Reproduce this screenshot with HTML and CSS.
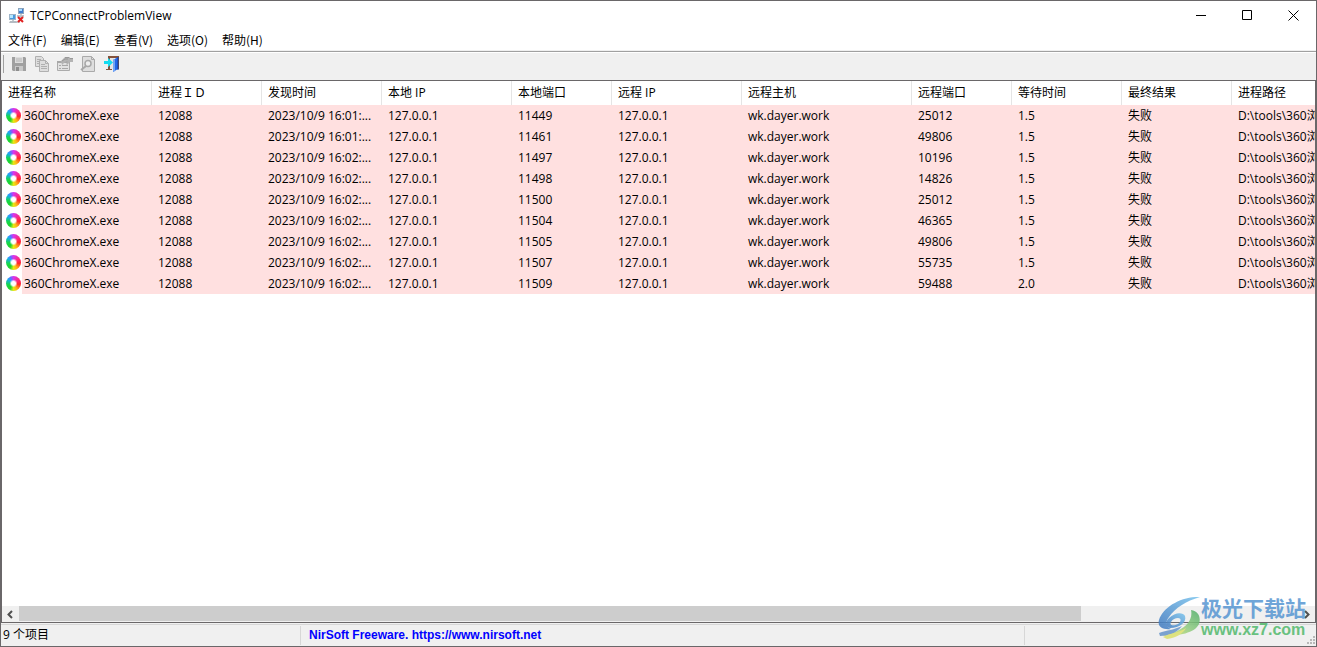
FILE: index.html
```
<!DOCTYPE html>
<html lang="zh-CN">
<head>
<meta charset="utf-8">
<title>TCPConnectProblemView</title>
<link rel="stylesheet" href="styles.css">
</head>
<body>
<div class="window">
  <header class="titlebar">
    <svg class="app-icon" viewBox="0 0 16 16" aria-hidden="true">
      <path d="M4 12v2h7M12 5v5" fill="none" stroke="#8d949c"/>
      <path d="M9 0h6v6H9z" fill="#8ba4bd"/><path d="M10 1h4v4h-4z" fill="#3f7ed0"/><path d="M10 1h3v2h-3z" fill="#a9dcff"/>
      <path d="M8 7h7v2H8z" fill="#bcc3ca"/>
      <path d="M0 6h7v6H0z" fill="#9db4c8"/><path d="M1 7h5v4H1z" fill="#4a9be0"/><path d="M1 7h3v3H1z" fill="#b5e8ff"/>
      <path d="M1 13h6l1 2H0z" fill="#b4bbc2"/>
      <path d="M9 9l5 5M14 9l-5 5" stroke="#e02020" stroke-width="2"/>
    </svg>
    <h1 class="title">TCPConnectProblemView</h1>
    <div class="controls">
      <button class="control" aria-label="最小化"><svg viewBox="0 0 11 11"><path d="M0 5.500h10"/></svg></button>
      <button class="control" aria-label="最大化"><svg viewBox="0 0 11 11"><path d="M.5.500h9v9h-9z"/></svg></button>
      <button class="control" aria-label="关闭"><svg viewBox="0 0 11 11"><path d="M.5.500l10 10M10.500.500l-10 10"/></svg></button>
    </div>
  </header>
  <nav class="menubar">
    <button class="menu">文件(F)</button>
    <button class="menu">编辑(E)</button>
    <button class="menu">查看(V)</button>
    <button class="menu">选项(O)</button>
    <button class="menu">帮助(H)</button>
  </nav>
  <div class="toolbar">
    <button class="tool" aria-label="保存" disabled><svg viewBox="0 0 16 16">
      <path d="M1 1h13l1 1v13H2l-1-1z" fill="#a0a0a0"/><path d="M4 1h8v6H4z" fill="#dedede"/><path d="M5 3h6M5 5h6" stroke="#b5b5b5"/><path d="M4 10h8v5H4z" fill="#c8c8c8"/><path d="M5 11h3v4H5z" fill="#8e8e8e"/></svg></button>
    <button class="tool" aria-label="复制" disabled><svg viewBox="0 0 16 16" fill="#dedede" stroke="#b0b0b0">
      <path d="M1.500.500h6l2 2v8h-8z"/><path d="M3 3.500h4M3 5.500h3M3 7.500h3"/><path d="M5.500 4.500h6l3 3v8h-9z"/><path d="M11.500 4.500v3h3M7 8.500h4M7 10.500h6M7 12.500h6" fill="none"/></svg></button>
    <button class="tool" aria-label="属性" disabled><svg viewBox="0 0 16 16">
      <path d="M.5 5.500h12v9H.5z" fill="#e2e2e2" stroke="#ababab"/><path d="M0 5h13v2H0z" fill="#a8a8a8"/><path d="M2 9.500h2M5 9.500h6M2 12.500h2M5 12.500h6" stroke="#a8a8a8"/><path d="M4 5l4-4h4l1 1h3v4h-3l-3 3-1-1 2-2-1-1-3 2-2 2z" fill="#b4b4b4"/><path d="M8 1.500h4l1 1h3M5 5l3-2h3" fill="none" stroke="#999"/></svg></button>
    <button class="tool" aria-label="查找" disabled><svg viewBox="0 0 16 16">
      <path d="M2.500.500h9l3 3v12h-12z" fill="#dedede" stroke="#aaa"/><path d="M11.500.500v3h3" fill="none" stroke="#aaa"/><path d="M6 10l-5 4" stroke="#a8a8a8" stroke-width="2"/><circle cx="8" cy="7.500" r="3" fill="#eee" stroke="#a8a8a8" stroke-width="1.500"/></svg></button>
    <button class="tool" aria-label="退出"><svg viewBox="0 0 16 16">
      <path d="M5 0h11v13h-2V2H7v11H5z" fill="#84523c"/><path d="M7 2h4v11H7z" fill="#e4e4e4"/><path d="M10 4l5-3v12l-5 3z" fill="#2467e8"/><path d="M10 4l2-1v12l-2 1z" fill="#72a5f5"/><path d="M15 1v13" stroke="#123c9a"/><path d="M1 5h4V2l5 4.500L5 11V8H1z" fill="#14dcf0"/><path d="M3 13.500h6" stroke="#84523c"/></svg></button>
  </div>
  <main class="list">
    <div class="viewport">
      <table class="grid">
        <colgroup><col class="w150"><col class="w110"><col class="w120"><col class="w130"><col class="w100"><col class="w130"><col class="w170"><col class="w100"><col class="w110"><col class="w110"><col></colgroup>
        <thead><tr><th>进程名称</th><th>进程ＩＤ</th><th>发现时间</th><th>本地 IP</th><th>本地端口</th><th>远程 IP</th><th>远程主机</th><th>远程端口</th><th>等待时间</th><th>最终结果</th><th>进程路径</th></tr></thead>
        <tbody>
          <tr><td><i class="browser"></i>360ChromeX.exe</td><td>12088</td><td>2023/10/9 16:01:...</td><td>127.0.0.1</td><td>11449</td><td>127.0.0.1</td><td>wk.dayer.work</td><td>25012</td><td>1.5</td><td>失败</td><td>D:\tools\360浏</td></tr>
          <tr><td><i class="browser"></i>360ChromeX.exe</td><td>12088</td><td>2023/10/9 16:01:...</td><td>127.0.0.1</td><td>11461</td><td>127.0.0.1</td><td>wk.dayer.work</td><td>49806</td><td>1.5</td><td>失败</td><td>D:\tools\360浏</td></tr>
          <tr><td><i class="browser"></i>360ChromeX.exe</td><td>12088</td><td>2023/10/9 16:02:...</td><td>127.0.0.1</td><td>11497</td><td>127.0.0.1</td><td>wk.dayer.work</td><td>10196</td><td>1.5</td><td>失败</td><td>D:\tools\360浏</td></tr>
          <tr><td><i class="browser"></i>360ChromeX.exe</td><td>12088</td><td>2023/10/9 16:02:...</td><td>127.0.0.1</td><td>11498</td><td>127.0.0.1</td><td>wk.dayer.work</td><td>14826</td><td>1.5</td><td>失败</td><td>D:\tools\360浏</td></tr>
          <tr><td><i class="browser"></i>360ChromeX.exe</td><td>12088</td><td>2023/10/9 16:02:...</td><td>127.0.0.1</td><td>11500</td><td>127.0.0.1</td><td>wk.dayer.work</td><td>25012</td><td>1.5</td><td>失败</td><td>D:\tools\360浏</td></tr>
          <tr><td><i class="browser"></i>360ChromeX.exe</td><td>12088</td><td>2023/10/9 16:02:...</td><td>127.0.0.1</td><td>11504</td><td>127.0.0.1</td><td>wk.dayer.work</td><td>46365</td><td>1.5</td><td>失败</td><td>D:\tools\360浏</td></tr>
          <tr><td><i class="browser"></i>360ChromeX.exe</td><td>12088</td><td>2023/10/9 16:02:...</td><td>127.0.0.1</td><td>11505</td><td>127.0.0.1</td><td>wk.dayer.work</td><td>49806</td><td>1.5</td><td>失败</td><td>D:\tools\360浏</td></tr>
          <tr><td><i class="browser"></i>360ChromeX.exe</td><td>12088</td><td>2023/10/9 16:02:...</td><td>127.0.0.1</td><td>11507</td><td>127.0.0.1</td><td>wk.dayer.work</td><td>55735</td><td>1.5</td><td>失败</td><td>D:\tools\360浏</td></tr>
          <tr><td><i class="browser"></i>360ChromeX.exe</td><td>12088</td><td>2023/10/9 16:02:...</td><td>127.0.0.1</td><td>11509</td><td>127.0.0.1</td><td>wk.dayer.work</td><td>59488</td><td>2.0</td><td>失败</td><td>D:\tools\360浏</td></tr>
        </tbody>
      </table>
    </div>
    <div class="scrollbar">
      <button class="arrow" aria-label="向左滚动"><svg viewBox="0 0 17 15"><path d="M10 4L6.500 7.500 10 11"/></svg></button>
      <div class="track"><div class="thumb"></div></div>
      <button class="arrow" aria-label="向右滚动"><svg viewBox="0 0 17 15"><path d="M7 4l3.500 3.500L7 11"/></svg></button>
    </div>
  </main>
  <footer class="status">
    <div class="count">9 个项目</div>
    <div class="credit"><a href="https://www.nirsoft.net">NirSoft Freeware. https://www.nirsoft.net</a></div>
    <div class="rest"><svg class="grip" viewBox="0 0 9 9" fill="#b8b8b8"><path d="M6 0h2v2H6zM3 3h2v2H3zM6 3h2v2H6zM0 6h2v2H0zM3 6h2v2H3zM6 6h2v2H6z"/></svg></div>
  </footer>
  <div class="watermark">
    <svg class="swirl" viewBox="0 0 42 42" aria-hidden="true">
      <defs>
        <linearGradient id="blue" x1="0" y1="1" x2="1" y2="0"><stop offset="0" stop-color="#3f78bf"/><stop offset="1" stop-color="#79c4ee"/></linearGradient>
        <linearGradient id="green" x1="0" y1="1" x2="1" y2="0"><stop offset="0" stop-color="#e3e66a"/><stop offset=".5" stop-color="#8fcb80"/><stop offset="1" stop-color="#4fae68"/></linearGradient>
      </defs>
      <path d="M42 0C24-1 5 10 1 23c-2 7 4 10 12 9-5-2-6-7-2-12C17 11 28 4 42 0z" fill="url(#blue)"/>
      <path fill-rule="evenodd" d="M11 21c6-6 14-6 16-2 2 6-5 12-15 12-5-1-5-6-1-10zm2 4c-2 4 3 4 7 2 4-3 3-6 0-6-3 0-5 1-7 4z" fill="url(#blue)"/>
      <path d="M33 13c8 1 10 8 8 14-4 9-20 12-37 12 12-3 21-7 26-13 3-4 4-8 3-13z" fill="url(#green)"/>
      <path d="M1 36c8-3 15-3 23-7-5 7-14 10-22 10z" fill="#6795ca"/>
      <path d="M5 40c7-4 15-4 23-9-3 6-11 10-19 11z" fill="#dce06c"/>
    </svg>
    <div class="brand"><span class="brand-name">极光下载站</span><span class="brand-url">www.xz7.com</span></div>
  </div>
</div>
</body>
</html>
```
FILE: styles.css
```
* { box-sizing: border-box; }
body {
  margin: 0;
  font: 12px/20px "Open Sans", "Noto Sans CJK SC", sans-serif;
  color: #000;
}
button {
  padding: 0;
  border: 0;
  background: none;
  font: inherit;
  color: inherit;
}
svg { display: block; }
.window {
  position: relative;
  display: flex;
  flex-direction: column;
  height: 100vh;
  overflow: hidden;
  border: 1px solid #6a6769;
  background: #fff;
}
.titlebar {
  display: flex;
  align-items: center;
  height: 29px;
  padding-left: 8px;
  flex: none;
}
.app-icon { width: 16px; height: 16px; }
.title {
  flex: 1;
  margin: 0 0 0 5px;
  font-size: 12px;
  font-weight: 400;
}
.controls { display: flex; }
.control {
  display: grid;
  place-items: center;
  width: 46px;
  height: 29px;
}
.control svg { width: 11px; height: 11px; fill: none; stroke: #000; }
.menubar {
  display: flex;
  gap: 14px;
  height: 21px;
  padding-left: 7px;
  border-bottom: 1px solid #f0f0f0;
  font-family: "Noto Sans CJK SC", sans-serif;
  flex: none;
}
.menu { white-space: nowrap; }
.toolbar {
  display: flex;
  align-items: center;
  gap: 7px;
  height: 29px;
  padding: 0 0 4px 9px;
  border-top: 1px solid #a0a0a0;
  background: #f0f0f0;
  box-shadow: inset 0 1px #fff;
  flex: none;
}
.toolbar::before {
  content: "";
  width: 1px;
  height: 18px;
  margin-left: -7px;
  background: #a0a0a0;
}
.tool svg { width: 16px; height: 16px; }
.list {
  display: flex;
  flex-direction: column;
  flex: 1;
  min-height: 0;
  border: 1px solid #6a6769;
}
.viewport { flex: 1; min-height: 0; overflow: hidden; }
.grid {
  width: 100%;
  table-layout: fixed;
  border-collapse: collapse;
}
.w100 { width: 100px; }
.w110 { width: 110px; }
.w120 { width: 120px; }
.w130 { width: 130px; }
.w150 { width: 150px; }
.w170 { width: 170px; }
th, td {
  padding: 0 0 0 6px;
  overflow: hidden;
  text-align: left;
  white-space: nowrap;
}
th {
  height: 24px;
  font-weight: 400;
}
th:not(:last-child) { background: linear-gradient(#e5e5e5, #e5e5e5) right / 1px 100% no-repeat; }
td {
  height: 21px;
  background: #ffe0e0;
}
td:first-child {
  padding-left: 4px;
  background: linear-gradient(90deg, #fff 20px, #ffe0e0 20px);
}
.browser {
  display: inline-block;
  width: 15px;
  height: 15px;
  margin-right: 3px;
  border-radius: 50%;
  vertical-align: -3px;
  background: radial-gradient(circle, #fff 2px, transparent 4px), conic-gradient(#d535f0, #ff2878 60deg, #ff2828 100deg, #ffb514 150deg, #e4e914 180deg, #20d42a 215deg, #16d650 260deg, #19a9f5 310deg, #6f65ff 335deg, #d535f0);
}
.scrollbar {
  display: flex;
  height: 16px;
  background: #f0f0f0;
  flex: none;
}
.arrow { width: 17px; }
.arrow svg { width: 17px; height: 15px; fill: none; stroke: #505050; stroke-width: 2; }
.track { flex: 1; }
.thumb { width: 83%; height: 15px; background: #cdcdcd; }
.status {
  display: flex;
  height: 23px;
  padding: 3px 0 1px;
  background: linear-gradient(#d7d7d7, #d7d7d7) 0 1px / 100% 1px no-repeat #f0f0f0;
  line-height: 18px;
  flex: none;
}
.status > div { padding-left: 2px; }
.count { width: 300px; border-right: 1px solid #d7d7d7; }
.status .credit {
  width: 724px;
  padding-left: 8px;
  border-right: 1px solid #d7d7d7;
  font-family: "Liberation Sans", sans-serif;
  font-weight: 700;
}
.credit a { color: #00f; text-decoration: none; }
.rest {
  display: flex;
  flex: 1;
  justify-content: flex-end;
  align-items: flex-end;
}
.grip { width: 9px; height: 9px; }
.watermark {
  position: absolute;
  right: 10px;
  bottom: 7px;
  display: flex;
  gap: 1px;
  opacity: .85;
  pointer-events: none;
}
.swirl { width: 42px; height: 42px; }
.brand {
  display: flex;
  flex-direction: column;
  font-family: "Liberation Sans", "Noto Sans CJK SC", sans-serif;
}
.brand-name {
  font-size: 21px;
  line-height: 24px;
  font-weight: 700;
  color: #5796d2;
}
.brand-url {
  font-size: 16px;
  line-height: 18px;
  font-weight: 700;
  color: #52b96c;
}
```
